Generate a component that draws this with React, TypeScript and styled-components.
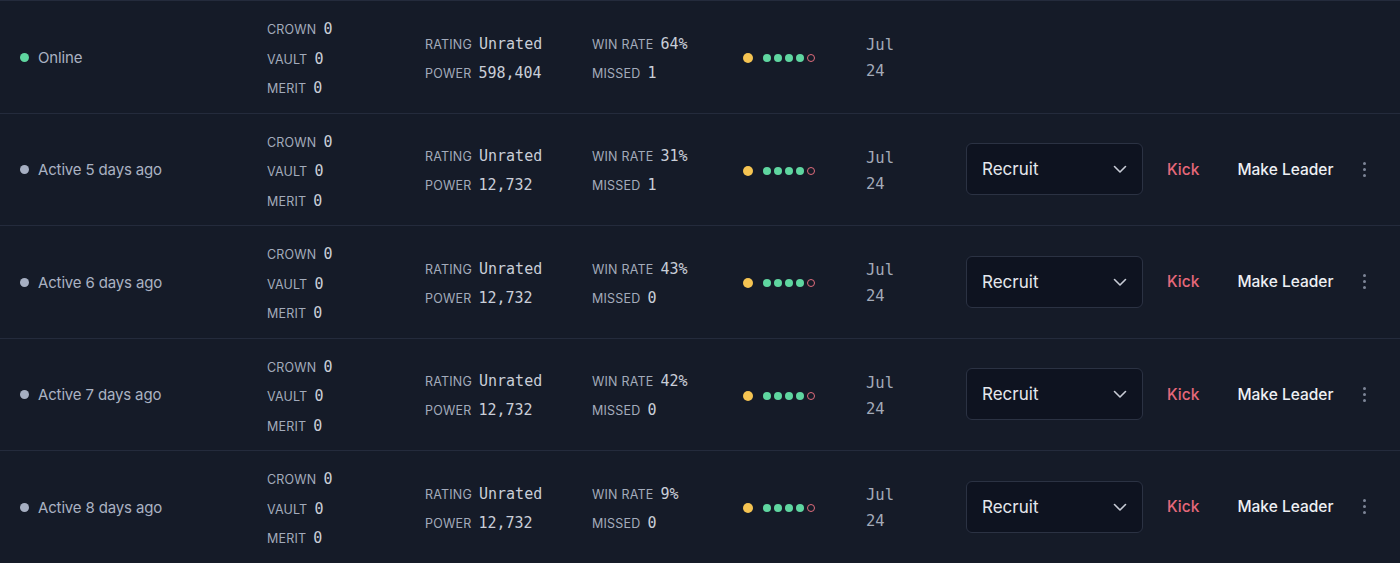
import React from "react";
import styled, { createGlobalStyle } from "styled-components";

const GlobalStyle = createGlobalStyle`
  html, body {
    margin: 0;
    padding: 0;
    background: #151b28;
  }
  body {
    font-family: Inter, "Noto Sans", sans-serif;
    -webkit-font-smoothing: antialiased;
  }
`;

const Table = styled.div`
  display: flex;
  flex-direction: column;
  border-top: 1px solid #242b3c;
  background: #151b28;
  overflow: hidden;
`;

const Row = styled.div`
  display: grid;
  grid-template-columns: 247px 158px 167px 151px 123px 100px 1fr;
  align-items: center;
  height: 111.5px;
  padding-left: 20px;
  border-bottom: 1px solid #242b3c;
  box-sizing: content-box;
`;

const Status = styled.div`
  display: flex;
  align-items: center;
  gap: 9px;
  color: #aab2c2;
  font-size: 15px;
  letter-spacing: -0.15px;
  padding-top: 1px;
`;

const StatusDot = styled.span<{ $online?: boolean }>`
  width: 9px;
  height: 9px;
  border-radius: 50%;
  background: ${(p) => (p.$online ? "#5fd6a0" : "#a6afc2")};
`;

const Stack = styled.div<{ $gap: number; $shift: number }>`
  display: flex;
  flex-direction: column;
  gap: ${(p) => p.$gap}px;
  line-height: 18px;
  padding-top: ${(p) => p.$shift}px;
`;

const Stat = styled.div`
  display: flex;
  align-items: baseline;
  gap: 7px;
`;

const Label = styled.span`
  font-size: 12.5px;
  color: #a3abbb;
  letter-spacing: 0.2px;
  text-transform: uppercase;
`;

const Value = styled.span`
  font-family: "DejaVu Sans Mono", "Liberation Mono", monospace;
  font-size: 15px;
  color: #c9ced8;
`;

const Form = styled.div`
  display: flex;
  align-items: center;
  gap: 3px;
  padding-top: 3px;
`;

const FormDot = styled.span<{ $kind: "warn" | "win" | "loss" }>`
  box-sizing: border-box;
  width: ${(p) => (p.$kind === "warn" ? 10 : 8)}px;
  height: ${(p) => (p.$kind === "warn" ? 10 : 8)}px;
  border-radius: 50%;
  margin-right: ${(p) => (p.$kind === "warn" ? 7 : 0)}px;
  background: ${(p) =>
    p.$kind === "warn" ? "#f5c452" : p.$kind === "win" ? "#5fd6a0" : "transparent"};
  border: ${(p) => (p.$kind === "loss" ? "1.3px solid #e06c7c" : "none")};
`;

const DateCell = styled.div`
  display: flex;
  flex-direction: column;
  gap: 6px;
  font-family: "DejaVu Sans Mono", "Liberation Mono", monospace;
  font-size: 15.5px;
  color: #a3aab8;
  line-height: 20px;
  padding-top: 3px;
`;

const Actions = styled.div`
  display: flex;
  align-items: center;
`;

const Select = styled.div`
  box-sizing: border-box;
  width: 177px;
  height: 52px;
  display: flex;
  align-items: center;
  justify-content: space-between;
  padding: 0 14px 0 15px;
  background: #0e1320;
  border: 1px solid #2b3243;
  border-radius: 6px;
  color: #e4e7ed;
  font-size: 17px;
`;

const TextButton = styled.button<{ $danger?: boolean }>`
  background: none;
  border: 0;
  padding: 0;
  font-family: inherit;
  font-size: 15.5px;
  font-weight: 500;
  cursor: pointer;
  color: ${(p) => (p.$danger ? "#e5687a" : "#eef0f4")};
`;

const KickButton = styled(TextButton)`
  margin-left: 24px;
`;

const LeaderButton = styled(TextButton)`
  margin-left: 38px;
`;

const Kebab = styled.div`
  margin-left: 30px;
  display: flex;
  flex-direction: column;
  gap: 3px;
  span {
    width: 3px;
    height: 3px;
    border-radius: 50%;
    background: #7d8597;
  }
`;

const Chevron = () => (
  <svg width="16" height="16" viewBox="0 0 16 16" fill="none">
    <path d="M2.5 5.5 L8 11 L13.5 5.5" stroke="#c8ccd6" strokeWidth="1.6" strokeLinecap="round" strokeLinejoin="round" />
  </svg>
);

type Member = {
  status: string;
  online?: boolean;
  power: string;
  winRate: string;
  missed: string;
  actions: boolean;
};

const members: Member[] = [
  { status: "Online", online: true, power: "598,404", winRate: "64%", missed: "1", actions: false },
  { status: "Active 5 days ago", power: "12,732", winRate: "31%", missed: "1", actions: true },
  { status: "Active 6 days ago", power: "12,732", winRate: "43%", missed: "0", actions: true },
  { status: "Active 7 days ago", power: "12,732", winRate: "42%", missed: "0", actions: true },
  { status: "Active 8 days ago", power: "12,732", winRate: "9%", missed: "0", actions: true },
];

const MemberRow: React.FC<{ m: Member }> = ({ m }) => (
  <Row>
    <Status>
      <StatusDot $online={m.online} />
      {m.status}
    </Status>
    <Stack $gap={10.5} $shift={5}>
      <Stat><Label>Crown</Label><Value>0</Value></Stat>
      <Stat><Label>Vault</Label><Value>0</Value></Stat>
      <Stat><Label>Merit</Label><Value>0</Value></Stat>
    </Stack>
    <Stack $gap={10} $shift={4}>
      <Stat><Label>Rating</Label><Value>Unrated</Value></Stat>
      <Stat><Label>Power</Label><Value>{m.power}</Value></Stat>
    </Stack>
    <Stack $gap={10} $shift={4}>
      <Stat><Label>Win rate</Label><Value>{m.winRate}</Value></Stat>
      <Stat><Label>Missed</Label><Value>{m.missed}</Value></Stat>
    </Stack>
    <Form>
      <FormDot $kind="warn" />
      <FormDot $kind="win" />
      <FormDot $kind="win" />
      <FormDot $kind="win" />
      <FormDot $kind="win" />
      <FormDot $kind="loss" />
    </Form>
    <DateCell>
      <span>Jul</span>
      <span>24</span>
    </DateCell>
    {m.actions ? (
      <Actions>
        <Select>
          Recruit
          <Chevron />
        </Select>
        <KickButton $danger>Kick</KickButton>
        <LeaderButton>Make Leader</LeaderButton>
        <Kebab>
          <span />
          <span />
          <span />
        </Kebab>
      </Actions>
    ) : (
      <div />
    )}
  </Row>
);

export default function App() {
  return (
    <>
      <GlobalStyle />
      <Table>
        {members.map((m, i) => (
          <MemberRow key={i} m={m} />
        ))}
      </Table>
    </>
  );
}
